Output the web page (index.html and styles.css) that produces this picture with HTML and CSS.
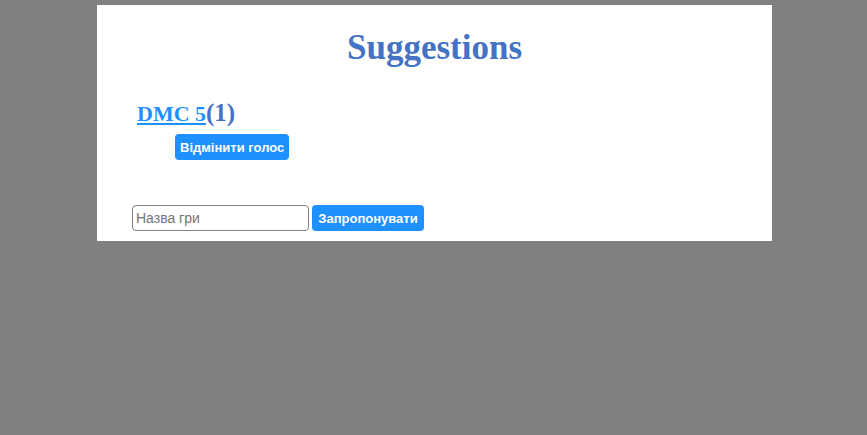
FILE: index.html
```html
<!DOCTYPE html>
<html lang="uk">
<head>
<meta charset="utf-8">
<title>Suggestions</title>
<link rel="stylesheet" href="styles.css">
</head>
<body>
<main class="panel">
  <h1 class="title">Suggestions</h1>
  <ul class="games">
    <li class="game">
      <h2 class="game-name"><a href="#" class="game-link">DMC 5</a><span class="game-votes">(1)</span></h2>
      <button class="btn btn-vote" type="button">Відмінити голос</button>
    </li>
  </ul>
  <form class="suggest">
    <input class="suggest-input" type="text" placeholder="Назва гри">
    <button class="btn" type="button">Запропонувати</button>
  </form>
</main>
</body>
</html>
```
FILE: styles.css
```css
html, body {
  margin: 0;
  padding: 0;
  background: #808080;
  height: 100%;
}
.panel {
  width: 675px;
  margin: 5px 0 0 97px;
  background: #fff;
  padding: 23px 35px 10px 35px;
  box-sizing: border-box;
  font-family: "Liberation Serif", serif;
}
.title {
  margin: 0;
  text-align: center;
  font-size: 35px;
  line-height: 40px;
  color: #4472c4;
  font-weight: bold;
}
.games {
  list-style: none;
  margin: 32px 0 0 0;
  padding: 0 0 0 5px;
}
.game-name {
  margin: 0;
  font-size: 22px;
  line-height: 26px;
  height: 26px;
  color: #4472c4;
  font-weight: bold;
}
.game-votes {
  font-size: 25px;
  line-height: 1;
}
.game-link {
  color: #1e90ff;
  text-decoration: underline;
}
.btn {
  display: block;
  font-family: "Liberation Sans", Arial, sans-serif;
  font-weight: bold;
  font-size: 13px;
  color: #fff;
  background: #1e90ff;
  border: none;
  border-radius: 4px;
  padding: 0 5px;
  height: 26px;
  cursor: pointer;
}
.btn-vote {
  margin: 8px 0 0 38px;
}
.suggest {
  margin-top: 45px;
  display: flex;
  gap: 3px;
  align-items: stretch;
}
.suggest-input {
  width: 177px;
  height: 26px;
  box-sizing: border-box;
  border: 1px solid #808080;
  border-radius: 4px;
  font-family: "Liberation Sans", Arial, sans-serif;
  font-size: 14px;
  padding: 0 3px;
}
.suggest-input::placeholder {
  color: #757575;
}
.suggest .btn {
  height: 26px;
  width: 112px;
}
```
